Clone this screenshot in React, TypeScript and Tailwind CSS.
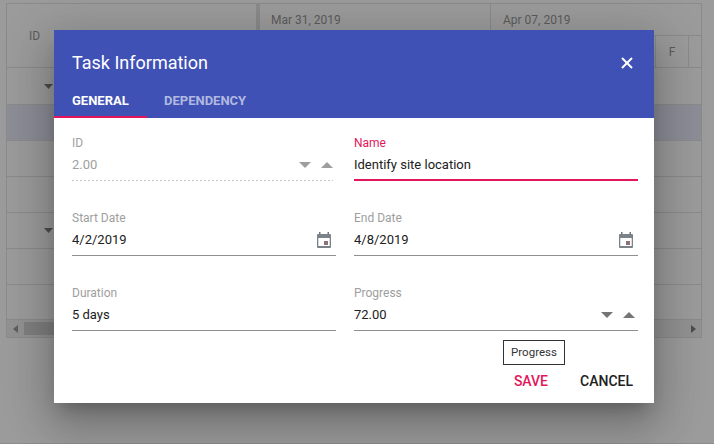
import type { ReactNode } from "react";
import { X } from "lucide-react";

const font = "font-['Roboto',sans-serif]";

function Spin() {
  return (
    <span className="flex items-center gap-[10px]">
      <svg width="12" height="6" viewBox="0 0 12 6" aria-hidden="true">
        <path d="M0 0h12L6 6z" fill="currentColor" />
      </svg>
      <svg width="12" height="6" viewBox="0 0 12 6" aria-hidden="true">
        <path d="M0 6h12L6 0z" fill="currentColor" />
      </svg>
    </span>
  );
}

function Calendar() {
  return (
    <svg width="14" height="16" viewBox="0 0 14 16" className="mr-[5px]" aria-hidden="true">
      <rect x="2" y="0" width="1.500" height="3" fill="#6f7680" />
      <rect x="10.500" y="0" width="1.500" height="3" fill="#6f7680" />
      <rect x="0" y="2" width="14" height="14" rx="1" fill="#7b8288" />
      <rect x="1.300" y="6" width="11.400" height="8" fill="#ffffff" />
      <rect x="7" y="9" width="4" height="4" fill="#8d7078" />
    </svg>
  );
}

function Field({
  label,
  value,
  active,
  disabled,
  right,
}: {
  label: string;
  value: string;
  active?: boolean;
  disabled?: boolean;
  right?: ReactNode;
}) {
  return (
    <div>
      <div className={`text-[12px] leading-[14px] h-[14px] ${active ? "text-[#e3165b]" : "text-[#9e9e9e]"}`}>{label}</div>
      <div
        className={`mt-[5px] flex items-center justify-between h-[26px] text-[13px] ${
          disabled
            ? "w-[261px] pb-[6px] text-[#a0a0a0] bg-[linear-gradient(to_right,#8a8a8a_1px,transparent_1px)] bg-[length:4px_1px] bg-repeat-x bg-bottom"
            : active
            ? "pb-[4px] text-[#212121] border-b-2 border-[#e3165b]"
            : "pb-[5px] text-[#212121] border-b border-[#8f8f8f]"
        }`}
      >
        <span>{value}</span>
        {right}
      </div>
    </div>
  );
}

function Backdrop() {
  return (
    <div className="pt-[3px] pl-[6px] pr-[12px] h-[444px] border-b border-[#8c8c8c]">
      <div className="h-[335px] border border-[#8a8a8a] text-[#5c5c5c] text-[12px] flex flex-col">
        <div className="h-[64px] flex border-b border-[#8a8a8a]">
          <div className="w-[253px] flex items-center pl-[22px] border-r-[4px] border-[#8a8a8a]">ID</div>
          <div className="flex-1 flex flex-col">
            <div className="h-[32px] flex items-center border-b border-[#8a8a8a]">
              <span className="w-[231px] pl-[11px] border-r border-[#8a8a8a] h-full flex items-center">Mar 31, 2019</span>
              <span className="pl-[12px]">Apr 07, 2019</span>
            </div>
            <div className="flex-1 flex justify-end">
              <span className="w-[34px] border-l border-r border-[#8a8a8a] flex items-center justify-center">F</span>
              <span className="w-[12px]" />
            </div>
          </div>
        </div>
        {[37, 36, 36, 36, 36, 36, 35].map((h, i) => (
          <div
            key={i}
            className={`border-b border-[#8a8a8a] flex items-center pl-[37px] ${i === 1 ? "bg-[#8c8d96]" : ""}`}
            style={{ height: h }}
          >
            {i === 0 || i === 4 ? (
              <svg width="9" height="5" viewBox="0 0 9 5" aria-hidden="true">
                <path d="M0 0h9L4.500 5z" fill="#4d4d4d" />
              </svg>
            ) : null}
          </div>
        ))}
        <div className="flex-1 flex items-center justify-between bg-[#929292] px-[5px]">
          <span className="flex items-center gap-[6px] pl-[1px]">
            <svg width="5" height="8" viewBox="0 0 5 8" aria-hidden="true">
              <path d="M5 0v8L0 4z" fill="#5f5f5f" />
            </svg>
            <span className="w-[40px] h-[13px] bg-[#7f7f7f]" />
          </span>
          <svg width="5" height="8" viewBox="0 0 5 8" aria-hidden="true">
            <path d="M0 0v8l5-4z" fill="#4d4d4d" />
          </svg>
        </div>
      </div>
    </div>
  );
}

export default function App() {
  return (
    <div className={`relative w-[714px] h-[444px] overflow-hidden bg-[#9b9b9b] ${font}`}>
      <Backdrop />
      <div className="absolute left-[54px] top-[30px] w-[600px] h-[373px] bg-white shadow-[0_11px_15px_-7px_rgba(0,0,0,0.22),0_24px_38px_3px_rgba(0,0,0,0.16),0_9px_46px_8px_rgba(0,0,0,0.14)]">
        <div className="bg-[#3f51b5] h-[88px]">
          <div className="flex items-center justify-between h-[59px] pl-[18px] pr-[17px] pt-[5px]">
            <span className="text-white text-[18px]">Task Information</span>
            <X className="w-[20px] h-[20px] text-white mt-[2px]" strokeWidth={2.4} strokeLinecap="butt" />
          </div>
          <div className="flex h-[29px] text-[13px] font-bold">
            <div className="w-[93px] pl-[18px] pt-[2px] text-white border-b-2 border-[#e3165b]">GENERAL</div>
            <div className="pl-[17px] pt-[2px] text-[#b2b9e1]">DEPENDENCY</div>
          </div>
        </div>
        <div className="relative">
          <div className="grid grid-cols-[264px_284px] gap-x-[18px] gap-y-[30px] pl-[18px] pt-[18px]">
            <Field label="ID" value="2.00" disabled right={<span className="text-[#9e9e9e]"><Spin /></span>} />
            <Field label="Name" value="Identify site location" active />
            <Field label="Start Date" value="4/2/2019" right={<Calendar />} />
            <Field label="End Date" value="4/8/2019" right={<Calendar />} />
            <Field label="Duration" value="5 days" />
            <Field label="Progress" value="72.00" right={<span className="text-[#757575] mr-[3px]"><Spin /></span>} />
          </div>
          <div className="absolute left-[449px] top-[222px] w-[62px] h-[25px] border border-[#333] bg-white text-[11.5px] text-[#333] flex items-center justify-center">
            Progress
          </div>
          <div className="flex justify-end gap-[32px] pr-[21px] mt-[40px] text-[14px] font-medium">
            <span className="text-[#e3165b]">SAVE</span>
            <span className="text-[#212121]">CANCEL</span>
          </div>
        </div>
      </div>
    </div>
  );
}
